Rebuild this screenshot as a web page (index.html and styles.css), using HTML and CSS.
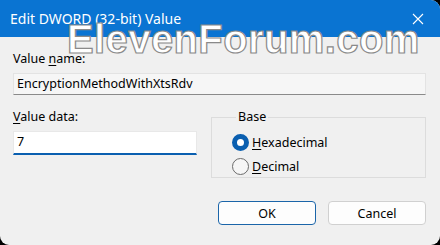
FILE: index.html
```html
<!DOCTYPE html>
<html>
<head>
<meta charset="utf-8">
<link rel="stylesheet" href="styles.css">
</head>
<body>
<div class="dialog">
  <div class="titlebar">
    <span class="title">Edit DWORD (32-bit) Value</span>
    <svg class="close" width="12" height="12" viewBox="0 0 12 12"><path d="M1 1L11 11M11 1L1 11" stroke="#fff" stroke-width="1.1"/></svg>
  </div>
  <div class="body">
    <div class="label first">Value <u>n</u>ame:</div>
    <div class="field name">EncryptionMethodWithXtsRdv</div>
    <div class="row">
      <div class="col">
        <div class="label"><u>V</u>alue data:</div>
        <div class="field data">7</div>
      </div>
      <fieldset class="group">
        <legend>Base</legend>
        <div class="radio"><span class="dot on"></span><span><u>H</u>exadecimal</span></div>
        <div class="radio"><span class="dot"></span><span><u>D</u>ecimal</span></div>
      </fieldset>
    </div>
    <div class="buttons">
      <div class="btn primary">OK</div>
      <div class="btn">Cancel</div>
    </div>
  </div>
  <div class="watermark">ElevenForum.com</div>
</div>
</body>
</html>
```
FILE: styles.css
```css
html, body { margin: 0; padding: 0; background: #000; }
body { width: 440px; height: 245px; overflow: hidden; font-family: "Noto Sans", "Open Sans", sans-serif; font-size: 12.5px; color: #000; }
.dialog { position: relative; width: 440px; height: 245px; background: #f0f0f0; border-radius: 0 9px 9px 9px; overflow: hidden; }
.titlebar { height: 37px; background: #0a74d2; display: flex; align-items: center; justify-content: space-between; padding: 0 16px 0 10px; }
.title { color: #fff; font-size: 14px; }
.close { display: block; }
.body { padding: 0 14px 0 13px; }
.label { line-height: 16px; }
.label.first { padding-top: 14px; }
u { text-decoration-thickness: 1px; text-underline-offset: 2px; }
.field { box-sizing: border-box; height: 22px; line-height: 20px; padding: 0 3px; margin-top: 6px; }
.field.name { background: #f6f6f6; border: 1px solid #e3e3e3; border-bottom: 1px solid #8a8a8a; }
.field.data { background: #fff; border: 1px solid #e8e8e8; border-bottom: 2px solid #0a5fb0; height: 24px; width: 184px; }
.row { display: flex; justify-content: space-between; align-items: flex-start; margin-top: 6px; }
.col { padding-top: 8px; }
.group { box-sizing: border-box; width: 215px; height: 68px; margin: 9px 0 0 0; padding: 6px 0 0 20px; border: 1px solid #dcdcdc; border-radius: 0; }
legend { padding: 0 2px; margin-left: 4px; line-height: 14px; }
.radio { display: flex; align-items: center; gap: 3px; height: 24px; }
.dot { box-sizing: border-box; width: 17px; height: 17px; border-radius: 50%; border: 1px solid #6b6b6b; background: #f6f6f6; }
.dot.on { border: 5px solid #0a5fb0; background: #fff; }
.buttons { display: flex; justify-content: flex-end; gap: 12px; margin-top: 23px; }
.btn { box-sizing: border-box; width: 98px; height: 24px; border: 1px solid #d0d0d0; border-radius: 4px; background: #fdfdfd; display: flex; align-items: center; justify-content: center; }
.btn.primary { border-color: #1b65a9; }
.watermark { position: absolute; left: 67px; top: 17px; font-family: "Liberation Sans", Arial, sans-serif; font-weight: bold; font-size: 40px; color: #fff; -webkit-text-stroke: 1.2px #8a8a8a; letter-spacing: 0.4px; }
```
